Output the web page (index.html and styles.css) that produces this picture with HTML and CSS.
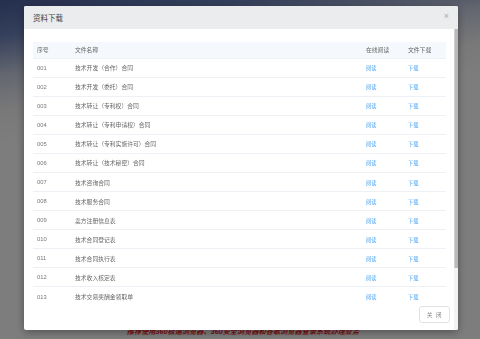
FILE: index.html
```html
<!DOCTYPE html>
<html lang="zh-CN">
<head>
<meta charset="utf-8">
<title>资料下载</title>
<link rel="stylesheet" href="styles.css">
</head>
<body>
<div class="page">
  <div class="banner"></div>
  <p class="notice">推荐使用360极速浏览器、360安全浏览器和谷歌浏览器登录系统办理业务</p>
</div>
<div class="mask"></div>
<div class="modal">
  <div class="modal-header">
    <span class="modal-title">资料下载</span>
    <span class="modal-close">×</span>
  </div>
  <div class="modal-body">
    <table class="files">
      <thead>
        <tr><th class="c-no">序号</th><th class="c-name">文件名称</th><th class="c-read">在线阅读</th><th class="c-down">文件下载</th></tr>
      </thead>
      <tbody>
        <tr><td class="num">001</td><td>技术开发（合作）合同</td><td><a>阅读</a></td><td><a>下载</a></td></tr>
        <tr><td class="num">002</td><td>技术开发（委托）合同</td><td><a>阅读</a></td><td><a>下载</a></td></tr>
        <tr><td class="num">003</td><td>技术转让（专利权）合同</td><td><a>阅读</a></td><td><a>下载</a></td></tr>
        <tr><td class="num">004</td><td>技术转让（专利申请权）合同</td><td><a>阅读</a></td><td><a>下载</a></td></tr>
        <tr><td class="num">005</td><td>技术转让（专利实施许可）合同</td><td><a>阅读</a></td><td><a>下载</a></td></tr>
        <tr><td class="num">006</td><td>技术转让（技术秘密）合同</td><td><a>阅读</a></td><td><a>下载</a></td></tr>
        <tr><td class="num">007</td><td>技术咨询合同</td><td><a>阅读</a></td><td><a>下载</a></td></tr>
        <tr><td class="num">008</td><td>技术服务合同</td><td><a>阅读</a></td><td><a>下载</a></td></tr>
        <tr><td class="num">009</td><td>卖方注册信息表</td><td><a>阅读</a></td><td><a>下载</a></td></tr>
        <tr><td class="num">010</td><td>技术合同登记表</td><td><a>阅读</a></td><td><a>下载</a></td></tr>
        <tr><td class="num">011</td><td>技术合同执行表</td><td><a>阅读</a></td><td><a>下载</a></td></tr>
        <tr><td class="num">012</td><td>技术收入核定表</td><td><a>阅读</a></td><td><a>下载</a></td></tr>
        <tr><td class="num">013</td><td>技术交易奖酬金领取单</td><td><a>阅读</a></td><td><a>下载</a></td></tr>
      </tbody>
    </table>
    <div class="modal-footer">
      <button class="btn-close">关 闭</button>
    </div>
  </div>
  <div class="scroll-track"><div class="scroll-thumb"></div></div>
</div>
</body>
</html>
```

FILE: styles.css
```css
* { box-sizing: border-box; }
html, body { margin: 0; padding: 0; }
body {
  width: 480px;
  height: 339px;
  overflow: hidden;
  background: #fafafa;
  font-family: "Liberation Sans", "Noto Sans CJK SC", sans-serif;
}
.page {
  display: flex;
  flex-direction: column;
  height: 339px;
}
.banner {
  height: 326px;
  background: linear-gradient(172deg, #4a5f9c 0px, #6a80b8 35px, #c8cee0 75px, #f2f2f2 110px, #fafafa 140px);
}
.notice {
  margin: 0;
  text-align: center;
  padding-left: 6px;
  font-size: 7.2px;
  line-height: 12px;
  font-weight: bold;
  font-style: italic;
  color: #ee2222;
}
.mask {
  position: fixed;
  inset: 0;
  background: rgba(0, 0, 0, 0.5);
}
.modal {
  position: fixed;
  left: 24px;
  top: 6px;
  width: 434px;
  height: 324px;
  display: flex;
  flex-direction: column;
  background: #fff;
  border-radius: 2px;
  box-shadow: 0 2px 8px rgba(0, 0, 0, 0.35);
  overflow: hidden;
}
.modal-header {
  height: 23px;
  flex: none;
  display: flex;
  align-items: center;
  justify-content: space-between;
  padding: 0 9px 1px 9px;
  background: #eaeced;
}
.modal-title {
  font-size: 7.5px;
  color: #444;
}
.modal-close {
  font-size: 9px;
  color: #aaa;
  line-height: 1;
  margin-top: -2px;
}
.modal-body {
  flex: 1;
  overflow: hidden;
  padding: 13px 12px 0 9px;
}
.scroll-track {
  position: absolute;
  right: 0;
  top: 23px;
  bottom: 0;
  width: 4px;
  background: #f3f3f3;
}
.scroll-thumb {
  height: 239px;
  background: #b9b9b9;
  border-left: 1px solid #d0d0d0;
}
.files {
  width: 413px;
  border-collapse: collapse;
  table-layout: fixed;
  font-size: 5.8px;
  color: #666;
}
.files th {
  height: 16px;
  padding: 0 4px;
  text-align: left;
  font-weight: normal;
  background: #f5f8fc;
  border-bottom: 1px solid #edf0f4;
}
.c-no { width: 38px; }
.c-read { width: 42px; }
.c-down { width: 42px; }
.files td {
  height: 19.08px;
  padding: 0 4px;
  border-bottom: 1px solid #edf0f4;
}
.files tbody tr:last-child td { border-bottom: none; }
.files td.num { color: #777; }
.files a {
  color: #3d9ef2;
  font-size: 5.2px;
  cursor: pointer;
}
.modal-footer {
  display: flex;
  justify-content: flex-end;
  margin-right: -4px;
  padding-bottom: 86px;
}
.btn-close {
  width: 31px;
  height: 17px;
  padding: 0;
  background: #fff;
  border: 1px solid #e2e2e2;
  border-radius: 3px;
  font-family: "Liberation Sans", "Noto Sans CJK SC", sans-serif;
  font-size: 5.8px;
  letter-spacing: 0.8px;
  color: #888;
}
```
